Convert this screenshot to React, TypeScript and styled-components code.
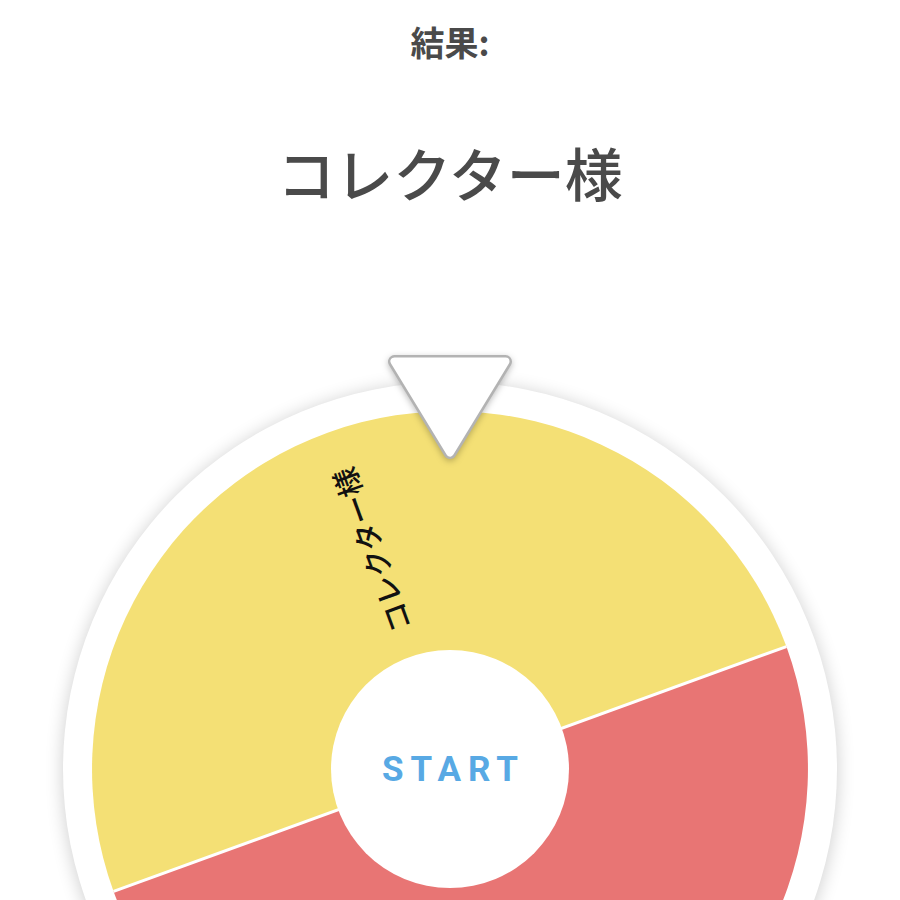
import React from "react";
import styled, { createGlobalStyle } from "styled-components";

const GlobalStyle = createGlobalStyle`
  html, body {
    margin: 0;
    padding: 0;
    height: 100%;
    overflow: hidden;
    background: #ffffff;
  }
  body {
    font-family: "Noto Sans CJK JP", "Noto Sans", sans-serif;
  }
`;

const Page = styled.div`
  display: flex;
  flex-direction: column;
  align-items: center;
  width: 900px;
  height: 900px;
  overflow: hidden;
`;

const Label = styled.div`
  margin-top: 22px;
  font-size: 34px;
  line-height: 40px;
  font-weight: 700;
  color: #4a4a4a;
`;

const Result = styled.div`
  margin-top: 75px;
  font-size: 58px;
  line-height: 70px;
  font-weight: 500;
  color: #4a4a4a;
`;

const WheelWrap = styled.div`
  position: relative;
  margin-top: 175px;
  width: 774px;
  height: 774px;
  flex-shrink: 0;
`;

const Rim = styled.div`
  width: 100%;
  height: 100%;
  box-sizing: border-box;
  padding: 29px;
  border-radius: 50%;
  background: #ffffff;
  box-shadow: 0 2px 18px rgba(0, 0, 0, 0.2);
`;

const Disc = styled.svg`
  display: block;
  width: 716px;
  height: 716px;
`;

const Pointer = styled.svg`
  position: absolute;
  top: -37px;
  left: 50%;
  margin-left: -75px;
  width: 150px;
  height: 130px;
  filter: drop-shadow(0 2px 3px rgba(0, 0, 0, 0.25));
`;

const StartButton = styled.button`
  position: absolute;
  top: 50%;
  left: 50%;
  width: 238px;
  height: 238px;
  margin: -119px 0 0 -119px;
  border: none;
  border-radius: 50%;
  background: #ffffff;
  color: #58a9e4;
  font-family: Roboto, "Liberation Sans", sans-serif;
  font-weight: 700;
  font-size: 35px;
  letter-spacing: 7px;
  padding: 0 0 0 7px;
  cursor: pointer;
`;

const C = 358;
const R = 358;

const pt = (deg: number, r: number) => {
  const a = (deg * Math.PI) / 180;
  return `${C + r * Math.cos(a)} ${C + r * Math.sin(a)}`;
};

const segments = [
  { from: 160, to: 340, color: "#f4e075", label: "コレクター様" },
  { from: 340, to: 520, color: "#e87574", label: "" },
];

export default function App() {
  return (
    <>
      <GlobalStyle />
      <Page>
        <Label>結果:</Label>
        <Result>コレクター様</Result>
        <WheelWrap>
          <Rim>
            <Disc viewBox="0 0 716 716">
              {segments.map((s, i) => (
                <path
                  key={i}
                  d={`M ${C} ${C} L ${pt(s.from, R)} A ${R} ${R} 0 0 1 ${pt(s.to, R)} Z`}
                  fill={s.color}
                />
              ))}
              <line
                x1={C + R * Math.cos((160 * Math.PI) / 180)}
                y1={C + R * Math.sin((160 * Math.PI) / 180)}
                x2={C + R * Math.cos((340 * Math.PI) / 180)}
                y2={C + R * Math.sin((340 * Math.PI) / 180)}
                stroke="#ffffff"
                strokeWidth={3}
              />
              {segments.map((s, i) =>
                s.label ? (
                  <text
                    key={`t${i}`}
                    x={C + 146}
                    y={C}
                    transform={`rotate(${(s.from + s.to) / 2} ${C} ${C})`}
                    dominantBaseline="central"
                    fontFamily='"Noto Sans CJK JP", sans-serif'
                    fontWeight={500}
                    fontSize={29}
                    fill="#111111"
                  >
                    {s.label}
                  </text>
                ) : null
              )}
            </Disc>
          </Rim>
          <StartButton>START</StartButton>
          <Pointer viewBox="0 0 150 130">
            <polygon
              points="19.5,16.5 130.5,16.5 75,107.5"
              fill="#b3b3b3"
              stroke="#b3b3b3"
              strokeWidth={13}
              strokeLinejoin="round"
            />
            <polygon
              points="19.5,16.5 130.5,16.5 75,107.5"
              fill="#ffffff"
              stroke="#ffffff"
              strokeWidth={8}
              strokeLinejoin="round"
            />
          </Pointer>
        </WheelWrap>
      </Page>
    </>
  );
}
